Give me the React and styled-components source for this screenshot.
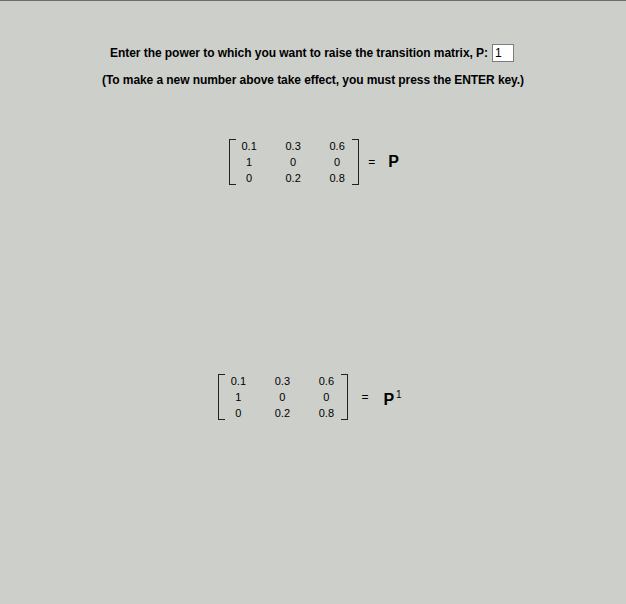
import React from 'react';
import styled, {createGlobalStyle} from 'styled-components';

const GlobalStyle = createGlobalStyle`
    html, body {
        margin: 0;
        padding: 0;
        background: #cdcfcb;
    }
`;

const Page = styled.div`
    width: 626px;
    height: 604px;
    box-sizing: border-box;
    border-top: 1px solid #6b6d6a;
    background: #cdcfcb;
    font-family: "Liberation Sans", Arial, sans-serif;
    color: #000;
    display: flex;
    flex-direction: column;
    align-items: center;
    padding-top: 42px;
`;

const PromptRow = styled.div`
    display: flex;
    align-items: center;
    gap: 4px;
    font-size: 12px;
    font-weight: bold;
    letter-spacing: -0.05px;
    height: 20px;
    margin-left: ${({shift}) => shift || 0}px;
`;

const PowerInput = styled.div`
    width: 18px;
    height: 16px;
    background: #fff;
    border: 1px solid #7d7d7d;
    font-size: 12px;
    font-weight: normal;
    line-height: 16px;
    padding-left: 2px;
    box-sizing: content-box;
`;

const Note = styled.div`
    font-size: 12px;
    font-weight: bold;
    letter-spacing: -0.07px;
    margin-top: 10px;
    line-height: 14px;
`;

const MatrixRow = styled.div`
    display: flex;
    align-items: center;
    margin-top: ${({top}) => top}px;
    margin-left: ${({shift}) => shift || 0}px;
`;

const Matrix = styled.div`
    position: relative;
    display: grid;
    grid-template-columns: repeat(3, 44px);
    grid-auto-rows: 16px;
    font-size: 11px;
    line-height: 16px;

    &::before,
    &::after {
        content: '';
        position: absolute;
        top: 1px;
        bottom: 1px;
        width: 6px;
        border-top: 1px solid #222;
        border-bottom: 1px solid #222;
    }

    &::before {
        left: 2px;
        border-left: 1px solid #222;
    }

    &::after {
        right: 0;
        border-right: 1px solid #222;
    }
`;

const Cell = styled.span`
    text-align: center;
`;

const Equals = styled.span`
    font-size: 12px;
    margin-left: ${({gap}) => gap}px;
`;

const Label = styled.span`
    font-size: 16px;
    font-weight: bold;
    margin-left: ${({gap}) => gap}px;
    line-height: 16px;
`;

const Sup = styled.sup`
    font-size: 10px;
    font-weight: normal;
    vertical-align: 7px;
    margin-left: 2px;
`;

const values = [
    ['0.1', '0.3', '0.6'],
    ['1', '0', '0'],
    ['0', '0.2', '0.8']
];

const MatrixView = ({rows}) => (
    <Matrix>
        {rows.flat().map((v, i) => (
            <Cell key={i}>{v}</Cell>
        ))}
    </Matrix>
);

export default function App() {
    return (
        <Page>
            <GlobalStyle />
            <PromptRow shift={-2}>
                <span>Enter the power to which you want to raise the transition matrix, P:</span>
                <PowerInput>1</PowerInput>
            </PromptRow>
            <Note>(To make a new number above take effect, you must press the ENTER key.)</Note>
            <MatrixRow top={51} shift={0}>
                <MatrixView rows={values} />
                <Equals gap={9}>=</Equals>
                <Label gap={13}>P</Label>
            </MatrixRow>
            <MatrixRow top={187} shift={-8}>
                <MatrixView rows={values} />
                <Equals gap={13}>=</Equals>
                <Label gap={15}>P<Sup>1</Sup></Label>
            </MatrixRow>
        </Page>
    );
}
